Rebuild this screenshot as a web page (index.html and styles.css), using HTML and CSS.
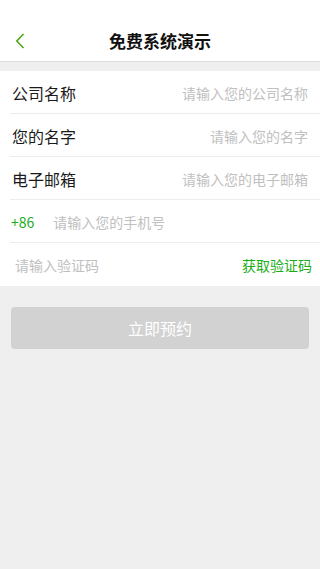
FILE: index.html
```html
<!DOCTYPE html>
<html lang="zh">
<head>
<meta charset="utf-8">
<link rel="stylesheet" href="styles.css">
</head>
<body>
<header class="header">
  <div class="bar">
    <span class="back">
      <svg width="10" height="16" viewBox="0 0 10 16"><path d="M8.5 1 L1.8 8 L8.5 15" fill="none" stroke="#4fa61a" stroke-width="1.6"/></svg>
    </span>
    <h1 class="title">免费系统演示</h1>
  </div>
</header>
<main class="form">
  <div class="row">
    <span class="label">公司名称</span>
    <span class="ph right">请输入您的公司名称</span>
  </div>
  <div class="row">
    <span class="label">您的名字</span>
    <span class="ph right">请输入您的名字</span>
  </div>
  <div class="row">
    <span class="label">电子邮箱</span>
    <span class="ph right">请输入您的电子邮箱</span>
  </div>
  <div class="row">
    <span class="code">+86</span>
    <span class="ph phone">请输入您的手机号</span>
  </div>
  <div class="row last">
    <span class="ph sms">请输入验证码</span>
    <span class="getcode">获取验证码</span>
  </div>
</main>
<div class="actions">
  <button class="submit">立即预约</button>
</div>
</body>
</html>
```
FILE: styles.css
```css
* { box-sizing: border-box; }
html, body { margin: 0; padding: 0; }
body {
  width: 320px;
  min-height: 569px;
  background: #efefef;
  font-family: "Noto Sans CJK SC", "Noto Sans", sans-serif;
}
.header {
  background: #fff;
  height: 62px;
  border-bottom: 1px solid #dcdcdc;
  padding-top: 20px;
}
.bar {
  height: 41px;
  display: flex;
  align-items: center;
  justify-content: center;
  position: relative;
}
.back {
  position: absolute;
  left: 15px;
  top: 13px;
  display: flex;
}
.title {
  margin: 0;
  font-size: 17px;
  font-weight: 700;
  color: #111;
  letter-spacing: 0;
}
.form {
  margin-top: 9px;
  background: #fff;
}
.row {
  height: 43px;
  display: flex;
  align-items: center;
  justify-content: space-between;
  padding: 0 12px;
  position: relative;
}
.row::after {
  content: "";
  position: absolute;
  left: 10px;
  right: 0;
  bottom: 0;
  height: 1px;
  background: #ececec;
}
.row.last::after { display: none; }
.label {
  font-size: 16px;
  color: #1a1a1a;
}
.ph {
  font-size: 14px;
  color: #c0c0c0;
}
.code {
  font-size: 14px;
  color: #1aad19;
  margin-left: -1px;
}
.phone {
  flex: 1;
  margin-left: 19px;
}
.sms { margin-left: 3px; }
.getcode {
  font-size: 14px;
  color: #1aad19;
  margin-right: -4px;
}
.actions {
  padding: 21px 11px 0;
}
.submit {
  width: 298px;
  height: 42px;
  border: none;
  border-radius: 4px;
  background: #d2d2d2;
  color: #fff;
  font-size: 16px;
  font-family: "Noto Sans CJK SC", sans-serif;
}
```
